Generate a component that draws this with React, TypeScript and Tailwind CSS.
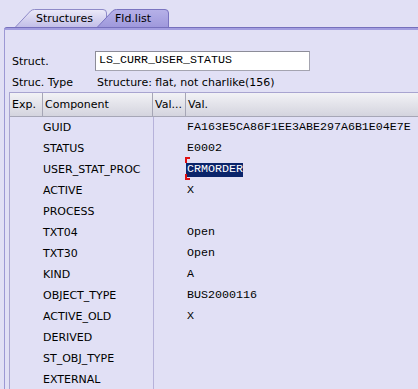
import React from "react";

const rows: [string, string][] = [
  ["GUID", "FA163E5CA86F1EE3ABE297A6B1E04E7E"],
  ["STATUS", "E0002"],
  ["USER_STAT_PROC", "CRMORDER"],
  ["ACTIVE", "X"],
  ["PROCESS", ""],
  ["TXT04", "Open"],
  ["TXT30", "Open"],
  ["KIND", "A"],
  ["OBJECT_TYPE", "BUS2000116"],
  ["ACTIVE_OLD", "X"],
  ["DERIVED", ""],
  ["ST_OBJ_TYPE", ""],
  ["EXTERNAL", ""],
];

function TabShape({ w, from, to, stroke, id }: { w: number; from: string; to: string; stroke: string; id: string }) {
  return (
    <svg className="absolute inset-0" width={w} height={19} viewBox={`0 0 ${w} 19`}>
      <defs>
        <linearGradient id={id} x1="0" y1="0" x2="0" y2="1">
          <stop offset="0" stopColor={from} />
          <stop offset="1" stopColor={to} />
        </linearGradient>
      </defs>
      <path
        d={`M0.5,19 L15.5,3 Q17,1.5 19.5,1.5 L${w - 4},1.5 Q${w - 0.5},1.5 ${w - 0.5},5 L${w - 0.5},19`}
        fill={`url(#${id})`}
        stroke={stroke}
        strokeWidth={1}
      />
    </svg>
  );
}

export default function App() {
  const mono = "font-['Liberation_Mono',monospace] text-[11.67px]";
  return (
    <div className="w-[418px] h-[389px] overflow-hidden bg-[#e1e0f5] text-black text-[11px] font-['DejaVu_Sans',sans-serif] leading-none">
      {/* tab strip */}
      <div className="h-[27px] pt-[8px] pl-[15px] flex">
        <div className="relative w-[92px] h-[19px]">
          <TabShape w={92} from="#eceaf8" to="#c2bee8" stroke="#8e8ac8" id="g1" />
          <div className="relative pl-[21px] pt-[5px]">Structures</div>
        </div>
        <div className="relative w-[72px] h-[19px] ml-[-10px]">
          <TabShape w={72} from="#b6b1e8" to="#9f99dc" stroke="#7a74c0" id="g2" />
          <div className="relative pl-[18px] pt-[5px]">Fld.list</div>
        </div>
      </div>
      <div className="ml-[4px] h-[3px] border-t border-[#7670bc] bg-[#a39ee0] rounded-tl-[3px]" />

      {/* panel */}
      <div className="ml-[4px] border-l border-[#9c98d4] h-[359px] pt-[21px]">
        <div className="flex items-center h-[20px]">
          <div className="w-[90px] pl-[7px]">Struct.</div>
          <div className={`w-[215px] h-[20px] bg-white border border-[#a4a4b0] border-t-[#8c8c98] border-l-[#8c8c98] flex items-center pl-[3px] ${mono}`}>
            LS_CURR_USER_STATUS
          </div>
        </div>
        <div className="flex items-center h-[19px] mt-[2px]">
          <div className="w-[92px] pl-[7px]">Struc. Type</div>
          <div>Structure: flat, not charlike(156)</div>
        </div>

        {/* table */}
        <div className="ml-[4px] border-l border-t border-[#a8a4d0]">
          <div className="flex h-[24px]">
            <div className="w-[33px] flex items-center pl-[2px] bg-gradient-to-b from-[#f2f2f6] to-[#d4d4de] border-r border-b border-[#a6a6b6]">Exp.</div>
            <div className="w-[110px] flex items-center pl-[2px] bg-gradient-to-b from-[#f2f2f6] to-[#d4d4de] border-r border-b border-[#a6a6b6]">Component</div>
            <div className="w-[33px] flex items-center pl-[2px] bg-gradient-to-b from-[#f2f2f6] to-[#d4d4de] border-r border-b border-[#a6a6b6]">Val...</div>
            <div className="flex-1 flex items-center pl-[2px] bg-gradient-to-b from-[#f2f2f6] to-[#d4d4de] border-b border-[#a6a6b6]">Val.</div>
          </div>
          {rows.map(([name, val]) => (
            <div key={name} className="flex h-[21px]">
              <div className="w-[33px]" />
              <div className="w-[110px] flex items-center">{name}</div>
              <div className="w-[33px] border-l border-[#b6b2da]" />
              <div className={`flex-1 flex items-center relative ${mono}`}>
                {name === "USER_STAT_PROC" ? (
                  <>
                    <span className="bg-[#0a246a] text-white pl-[1px] h-[14px] flex items-center">{val}</span>
                    <span className="absolute left-[-1px] top-[-2px] w-[5px] h-[6px] border-l-2 border-t-2 border-[#e01010]" />
                    <span className="absolute left-[-1px] bottom-[0px] w-[5px] h-[6px] border-l-2 border-b-2 border-[#e01010]" />
                  </>
                ) : (
                  <span className="pl-[1px]">{val}</span>
                )}
              </div>
            </div>
          ))}
        </div>
      </div>
    </div>
  );
}
